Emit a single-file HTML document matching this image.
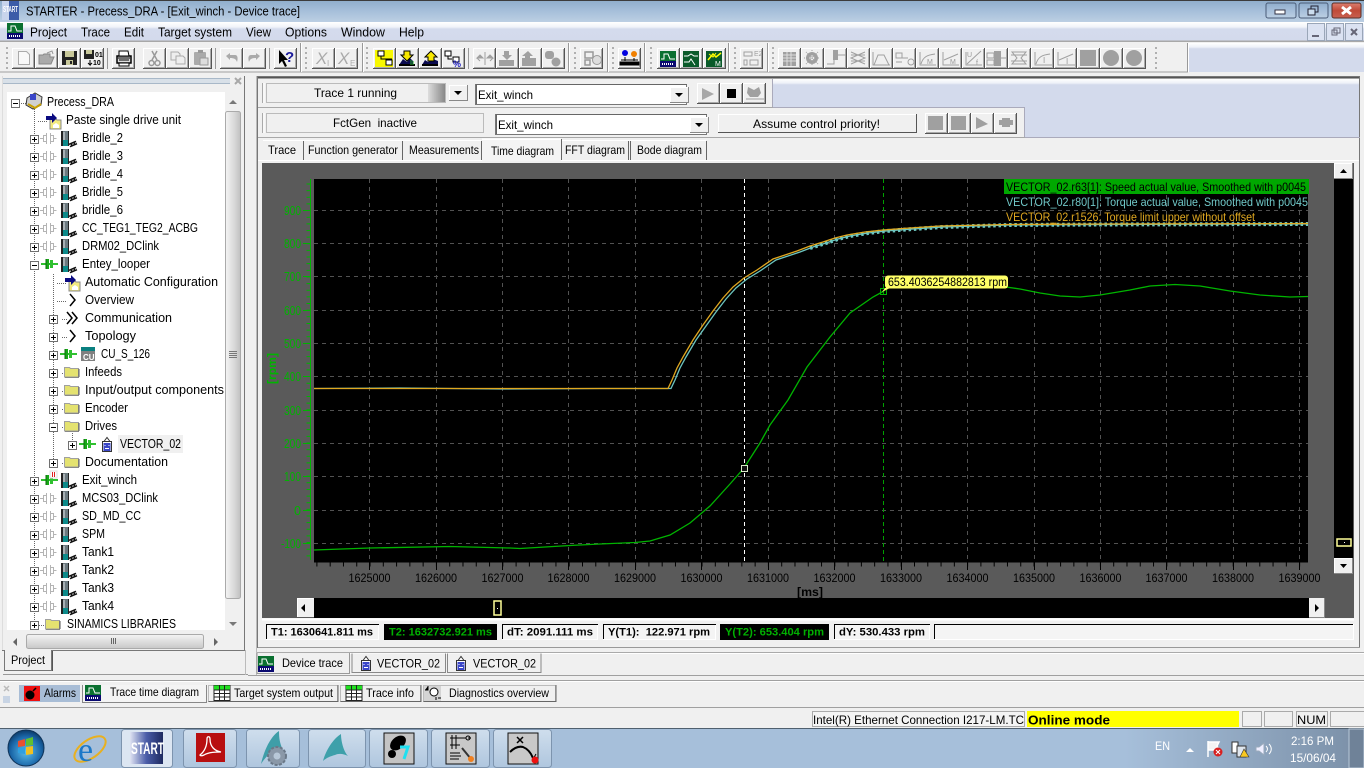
<!DOCTYPE html>
<html><head><meta charset="utf-8"><title>STARTER</title>
<style>
html,body{margin:0;padding:0;background:#f0f0f0;overflow:hidden;width:1364px;height:768px}
svg{display:block;font-family:"Liberation Sans",sans-serif;font-size:12px}
text{fill:#000;white-space:pre}
.tr text,text.tr{font-size:12.5px}
.ax{font-size:12px}
.gy text{fill:#00b400;font-size:12.5px}
.b{font-weight:bold;font-size:11px}
</style></head><body>
<svg width="1364" height="768" viewBox="0 0 1364 768" xmlns="http://www.w3.org/2000/svg">
<defs>
<linearGradient id="gt" x1="0" y1="0" x2="0" y2="1"><stop offset="0" stop-color="#8fadcb"/><stop offset=".5" stop-color="#a6bfda"/><stop offset="1" stop-color="#bccfe3"/></linearGradient>
<linearGradient id="gm" x1="0" y1="0" x2="0" y2="1"><stop offset="0" stop-color="#fff"/><stop offset=".25" stop-color="#f0f3f9"/><stop offset=".35" stop-color="#d4dbed"/><stop offset="1" stop-color="#d3daec"/></linearGradient>
<linearGradient id="gb" x1="0" y1="0" x2="0" y2="1"><stop offset="0" stop-color="#fff"/><stop offset=".14" stop-color="#eef1f8"/><stop offset=".2" stop-color="#d3daec"/><stop offset="1" stop-color="#d3daec"/></linearGradient>
<linearGradient id="gr" x1="0" y1="0" x2="1" y2="0"><stop offset="0" stop-color="#ddd"/><stop offset="1" stop-color="#888"/></linearGradient>
<linearGradient id="gc" x1="0" y1="0" x2="0" y2="1"><stop offset="0" stop-color="#dd8070"/><stop offset=".5" stop-color="#c04a38"/><stop offset="1" stop-color="#c86050"/></linearGradient>
<linearGradient id="gs" x1="0" y1="0" x2="1" y2="0"><stop offset="0" stop-color="#f4f4f4"/><stop offset=".6" stop-color="#d8d8d8"/><stop offset="1" stop-color="#c0c0c0"/></linearGradient>
<linearGradient id="gh" x1="0" y1="0" x2="0" y2="1"><stop offset="0" stop-color="#f4f4f4"/><stop offset="1" stop-color="#c8c8c8"/></linearGradient>
<linearGradient id="gd" x1="0" y1="0" x2="1" y2="0"><stop offset="0" stop-color="#a6bfda"/><stop offset="1" stop-color="#7d92aa"/></linearGradient>
<linearGradient id="gta" x1="0" y1="0" x2="0" y2="1"><stop offset="0" stop-color="#cfdeed"/><stop offset="1" stop-color="#afc6de"/></linearGradient>
<linearGradient id="gst" x1="0" y1="0" x2="1" y2="0"><stop offset="0" stop-color="#dfe3f2"/><stop offset=".5" stop-color="#4a5ca8"/><stop offset="1" stop-color="#1e2a60"/></linearGradient>
<radialGradient id="go" cx=".5" cy=".6" r=".6"><stop offset="0" stop-color="#5cc0ee"/><stop offset=".7" stop-color="#1a66a8"/><stop offset="1" stop-color="#0c3a68"/></radialGradient>

<g id="btn"><rect width="23" height="21" fill="#f0f0f0"/><path d="M.5 21V.5H22" stroke="#fff" fill="none"/><path d="M0 20.5h23M22.5 0v21" stroke="#555" fill="none"/><path d="M1 19.5h21M21.5 1v19" stroke="#aaa" fill="none"/></g>
<g id="grip" fill="#b0b0b0"><rect y="0" width="2" height="2"/><rect y="5" width="2" height="2"/><rect y="10" width="2" height="2"/><rect y="15" width="2" height="2"/><rect y="20" width="2" height="2"/></g>
<g id="sep"><path d="M.5 0v29" stroke="#999"/><path d="M1.5 0v29" stroke="#fff"/></g>

<g id="plus"><rect x=".5" y=".5" width="8" height="8" fill="#fff" stroke="#707070"/><path d="M2 4.5h5M4.5 2v5" stroke="#000"/></g>
<g id="minus"><rect x=".5" y=".5" width="8" height="8" fill="#fff" stroke="#707070"/><path d="M2 4.5h5" stroke="#000"/></g>
<g id="pg" fill="none" stroke="#b4b4b4"><path d="M0 6.5h3M3.500 3.500h3v6h-3zM6.500 1v11M10.500 1v11M10.500 3.500h3v6h-3M13.500 6.500h3"/></g>
<g id="pgr"><path d="M0 6h17" stroke="#30c030" stroke-width="2"/><rect x="5" y="1" width="3" height="10" fill="#18a818"/><rect x="9" y="2" width="3" height="8" fill="#30c030"/><path d="M5 1v10" stroke="#0a6a0a"/></g>
<g id="dv"><rect x="0" y="0" width="2" height="15" fill="#222"/><rect x="2" y="0" width="5" height="9" fill="#6d7a80"/><rect x="2" y="1" width="2" height="8" fill="#a8b0b4"/><rect x="2" y="9" width="5" height="6" fill="#0c8a8a"/><path d="M7.500 0v15" stroke="#222"/><path d="M8.500 14.500l7-3" stroke="#111" stroke-width="4"/><path d="M8.500 14.500l7-3" stroke="#fff" stroke-dasharray="1.500 1.500"/></g>
<g id="dr"><use href="#plus"/><use href="#pg" x="10" y="-3"/><use href="#dv" x="31" y="-4"/></g>
<g id="fd"><path d="M.5 2.500h5l1 1h8v8.500H.5z" fill="#e4e270" stroke="#a0a0a0"/><path d="M15 4v8" stroke="#555"/><path d="M1 12.500h14" stroke="#888"/></g>
<g id="vc"><path d="M1.500 5.500h9v10h-9zM3 5.500l3-4 3 4" fill="#fff" stroke="#333"/><rect x="2.500" y="7" width="7" height="8" fill="#3a46c8"/><path d="M4 9v1M8 9v1M4 12.500h4" stroke="#fff"/></g>
<g id="pst"><path d="M5 6h6l1 1h4v9H5z" fill="#f2ea80" stroke="#888"/><path d="M8 12l3-2 3 2v3H8z" fill="#fff"/><path d="M1 1h6V-2l5 5-5 5V5H1z" fill="#0a0a80" transform="translate(0 2)"/></g>
<g id="tr"><rect width="16" height="16" fill="#0a0a70"/><rect width="16" height="10" fill="#0a7030"/><path d="M1 8h3v-5h4l2 5h5" stroke="#fff" fill="none"/><path d="M2 13h12" stroke="#fff" stroke-dasharray="1 1" stroke-width="2"/></g>
<g id="grid"><rect width="16" height="15" fill="#fff" stroke="#222"/><rect width="16" height="4" fill="#20e020"/><path d="M0 4.500h16M0 8h16M0 11.500h16M5.500 0v15M10.500 0v15" stroke="#222"/></g>
<g id="arU"><path d="M0 4l4-4 4 4z" fill="#000"/></g>
<g id="arD"><path d="M0 0h8l-4 4z" fill="#000"/></g>
<g id="lb"><rect width="19" height="16" fill="#f0f0f0"/><path d="M.5 16V.5H18" stroke="#fff" fill="none"/><path d="M0 15.500h19M18.500 0v16" stroke="#888" fill="none"/></g>
</defs>

<!-- base -->
<rect width="1364" height="768" fill="#f0f0f0"/>
<!-- title bar -->
<rect width="1364" height="22" fill="url(#gt)"/><rect width="1364" height="1" fill="#3c3c3c"/>
<rect x="2" y="1" width="17" height="19" fill="#3c5ca8"/><rect x="2" y="1" width="7" height="19" fill="#c8d4ec"/>
<text x="3" y="12" style="font-size:8px;font-weight:bold" textLength="15" lengthAdjust="spacingAndGlyphs"><tspan fill="#fff">START</tspan></text>
<text x="26" y="15.500" style="font-size:12.5px" textLength="274" lengthAdjust="spacingAndGlyphs">STARTER - Precess_DRA - [Exit_winch - Device trace]</text>
<g>
<rect x="1266" y="3" width="30" height="15" rx="2" fill="url(#gt)" stroke="#4a5c78"/><rect x="1275" y="10" width="10" height="4" fill="#fff" stroke="#334"/>
<rect x="1299" y="3" width="29" height="15" rx="2" fill="url(#gt)" stroke="#4a5c78"/><rect x="1311" y="6" width="7" height="6" fill="none" stroke="#223"/><rect x="1308" y="9" width="7" height="6" fill="#cde" stroke="#223"/>
<rect x="1332" y="3" width="29" height="15" rx="2" fill="url(#gc)" stroke="#5a3028"/><path d="M1342 7l9 7M1351 7l-9 7" stroke="#fff" stroke-width="3"/>
</g>
<!-- menu -->
<rect y="22" width="1364" height="20" fill="url(#gm)"/><rect y="40.500" width="1364" height="1.500" fill="#a8a8a8"/>
<use href="#tr" x="7" y="23"/>
<g style="font-size:12.5px">
<text x="30" y="36.500" textLength="37" lengthAdjust="spacingAndGlyphs">Project</text>
<text x="81" y="36.500" textLength="29" lengthAdjust="spacingAndGlyphs">Trace</text>
<text x="124" y="36.500" textLength="20" lengthAdjust="spacingAndGlyphs">Edit</text>
<text x="158" y="36.500" textLength="74" lengthAdjust="spacingAndGlyphs">Target system</text>
<text x="246" y="36.500" textLength="25" lengthAdjust="spacingAndGlyphs">View</text>
<text x="285" y="36.500" textLength="42" lengthAdjust="spacingAndGlyphs">Options</text>
<text x="341" y="36.500" textLength="44" lengthAdjust="spacingAndGlyphs">Window</text>
<text x="399" y="36.500" textLength="25" lengthAdjust="spacingAndGlyphs">Help</text>
</g>
<g fill="#dbe2f2" stroke="#9aa6b8"><rect x="1307.500" y="23.500" width="17" height="17"/><rect x="1326.500" y="23.500" width="17" height="17"/><rect x="1345.500" y="23.500" width="17" height="17"/></g>
<path d="M1312 36h7" stroke="#667" stroke-width="2"/><rect x="1332" y="30" width="5" height="5" fill="none" stroke="#667"/><rect x="1334" y="28" width="6" height="5" fill="none" stroke="#667"/><path d="M1351 29l6 6M1357 29l-6 6" stroke="#667" stroke-width="2"/>

<!-- toolbar -->
<rect y="42" width="1188" height="30" fill="#f0f0f0"/>
<rect x="1188" y="43" width="176" height="29" fill="url(#gb)"/>
<rect y="71.500" width="1188" height="1" fill="#a0a0a0"/>
<g>
<use href="#grip" x="6" y="47"/><use href="#grip" x="305" y="47"/><use href="#grip" x="366" y="47"/><use href="#grip" x="574" y="47"/><use href="#grip" x="612" y="47"/><use href="#grip" x="650" y="47"/><use href="#grip" x="734" y="47"/><use href="#grip" x="772" y="47"/><use href="#grip" x="1155" y="47"/>
<use href="#sep" x="300" y="43"/><use href="#sep" x="362" y="43"/><use href="#sep" x="568" y="43"/><use href="#sep" x="607" y="43"/><use href="#sep" x="644" y="43"/><use href="#sep" x="728" y="43"/><use href="#sep" x="767" y="43"/><use href="#sep" x="1187" y="43"/>
<path d="M107.500 48v21M215.500 48v21M269.500 48v21M468.500 48v21" stroke="#999"/>
<use href="#btn" x="12" y="48"/><use href="#btn" x="35" y="48"/><use href="#btn" x="58" y="48"/><use href="#btn" x="81" y="48"/><use href="#btn" x="112" y="48"/><use href="#btn" x="143" y="48"/><use href="#btn" x="166" y="48"/><use href="#btn" x="189" y="48"/><use href="#btn" x="220" y="48"/><use href="#btn" x="243" y="48"/><use href="#btn" x="274" y="48"/><use href="#btn" x="312" y="48"/><use href="#btn" x="335" y="48"/><use href="#btn" x="373" y="48"/><use href="#btn" x="396" y="48"/><use href="#btn" x="419" y="48"/><use href="#btn" x="442" y="48"/><use href="#btn" x="473" y="48"/><use href="#btn" x="496" y="48"/><use href="#btn" x="519" y="48"/><use href="#btn" x="542" y="48"/><use href="#btn" x="580" y="48"/><use href="#btn" x="618" y="48"/><use href="#btn" x="657" y="48"/><use href="#btn" x="680" y="48"/><use href="#btn" x="703" y="48"/><use href="#btn" x="740" y="48"/>
<use href="#btn" x="778" y="48"/><use href="#btn" x="801" y="48"/><use href="#btn" x="824" y="48"/><use href="#btn" x="847" y="48"/><use href="#btn" x="870" y="48"/><use href="#btn" x="893" y="48"/><use href="#btn" x="916" y="48"/><use href="#btn" x="939" y="48"/><use href="#btn" x="962" y="48"/><use href="#btn" x="985" y="48"/><use href="#btn" x="1008" y="48"/><use href="#btn" x="1031" y="48"/><use href="#btn" x="1054" y="48"/><use href="#btn" x="1077" y="48"/><use href="#btn" x="1100" y="48"/><use href="#btn" x="1123" y="48"/>
<!-- icons left -->
<path d="M18.500 51.500h8l3 3v10h-11z" fill="#f8f8f8" stroke="#aaa"/>
<path d="M39 64V55h4l1-1h6v3h4l-3 7z" fill="#aaa" stroke="#888"/><path d="M47 53l5-2 1 3" fill="none" stroke="#999"/>
<rect x="62" y="51" width="15" height="14" fill="#222"/><rect x="65" y="51" width="9" height="6" fill="#c8c89a"/><rect x="66" y="60" width="7" height="5" fill="#c8c89a"/><rect x="70" y="61" width="2" height="3" fill="#222"/>
<rect x="84" y="50" width="10" height="9" fill="#222"/><rect x="86" y="50" width="6" height="4" fill="#c8c89a"/><path d="M90 60v5l-2-2m2 2l2-2" stroke="#000" fill="none"/><text x="95" y="57" style="font-size:7px;font-weight:bold">01</text><text x="93" y="65" style="font-size:7px;font-weight:bold">10</text>
<path d="M117 56h14v7h-14z" fill="#ddd" stroke="#000" stroke-width="1.500"/><path d="M119 51h9l1 5h-10z" fill="#fff" stroke="#000"/><path d="M119 60h10M118 58h12" stroke="#000"/><rect x="119" y="63" width="10" height="3" fill="#fff" stroke="#000"/>
<path d="M152 51l5 9M157 51l-5 9" stroke="#999" stroke-width="1.500"/><circle cx="151.500" cy="63" r="2.500" fill="none" stroke="#999" stroke-width="1.500"/><circle cx="157.500" cy="63" r="2.500" fill="none" stroke="#999" stroke-width="1.500"/>
<path d="M171 52h7l2 2v6h-9z" fill="#eee" stroke="#aaa"/><path d="M176 56h7l2 2v6h-9z" fill="#eee" stroke="#aaa"/>
<rect x="194" y="52" width="12" height="13" rx="1" fill="#aaa"/><rect x="198" y="50" width="5" height="3" fill="#999"/><rect x="200" y="58" width="8" height="7" fill="#ddd" stroke="#999"/>
<path d="M226 56l4-3v2h5c3 0 3 4 2 7-1-3-3-4-7-4v2z" fill="#aaa"/>
<path d="M260 56l-4-3v2h-5c-3 0-3 4-2 7 1-3 3-4 7-4v2z" fill="#aaa"/>
<path d="M279 50v14l3-3 3 6 2-1-3-6h4z" fill="#000"/><text x="285" y="62" style="font-size:15px;font-weight:bold"><tspan fill="#1a1a9a">?</tspan></text>
<text x="316" y="64" style="font-size:17px" font-style="italic"><tspan fill="#aaa">X</tspan></text><text x="327" y="66" style="font-size:8px"><tspan fill="#aaa">I</tspan></text>
<text x="338" y="64" style="font-size:17px" font-style="italic"><tspan fill="#aaa">X</tspan></text><text x="350" y="66" style="font-size:8px"><tspan fill="#aaa">E</tspan></text>
<!-- yellow -->
<rect x="375" y="50" width="18" height="17" fill="#f8f800"/><rect x="378" y="51" width="6" height="5" fill="#fff" stroke="#000"/><rect x="386" y="60" width="6" height="5" fill="#fff" stroke="#000"/><path d="M381 56v3h8v1M389 59h3" stroke="#000" fill="none"/>
<path d="M399 65l4-6 4 3 3-4 3 3v4z" fill="#0a0a50"/><path d="M399 65h16" stroke="#000" stroke-width="2"/><path d="M404 51h6v4h3l-6 6-6-6h3z" fill="#f8e800" stroke="#000"/><path d="M413 61v4M411 60v5" stroke="#2a2"/>
<path d="M422 65l3-5 3 2 5-3 5 2v4z" fill="#0a0a50"/><path d="M422 65h16" stroke="#000" stroke-width="2"/><path d="M431 51l6 6h-3v4h-6v-4h-3z" fill="#f8e800" stroke="#000"/>
<rect x="445" y="51" width="6" height="5" fill="#fff" stroke="#000"/><path d="M448 56v3h4" stroke="#000" fill="none"/><rect x="453" y="57" width="6" height="5" fill="#fff" stroke="#000"/><text x="453" y="67" style="font-size:9px;font-weight:bold"><tspan fill="#1a1ac0">%</tspan></text>
<!-- gray mid -->
<path d="M477 58h6l-3-3zM477 58l3 3M493 58h-6l3-3zM493 58l-3 3M485 52v13" stroke="#a0a0a0" fill="#a0a0a0"/>
<path d="M504 51h5v4h3l-5 5-5-5h2z" fill="#a0a0a0"/><rect x="499" y="60" width="15" height="6" fill="#a0a0a0"/>
<path d="M528 51l5 5h-3v4h-5v-4h-3z" fill="#a0a0a0"/><path d="M522 58v8h14v-8" fill="#a0a0a0"/>
<rect x="545" y="51" width="9" height="8" rx="3" fill="#a0a0a0"/><circle cx="556" cy="62" r="4.500" fill="#a0a0a0"/>
<path d="M585 52h8v6h-8zM585 60h5v5h-5z" fill="none" stroke="#999" stroke-width="1.500"/><circle cx="597" cy="60" r="4.500" fill="#ddd" stroke="#999"/>
<circle cx="625" cy="53" r="3" fill="#0000e0"/><circle cx="634" cy="54" r="3" fill="#f08000"/><path d="M625 57v4M634 58v3M621 60h17M620 62h19v3h-19z" stroke="#000" fill="#000"/>
<rect x="660" y="51" width="16" height="16" fill="#0a0a70"/><rect x="660" y="51" width="16" height="10" fill="#0a7030"/><path d="M661 59h3v-5h4l2 5h5" stroke="#fff" fill="none"/><path d="M662 64h12" stroke="#fff" stroke-width="2" stroke-dasharray="1 1"/>
<rect x="683" y="51" width="16" height="16" fill="#0a5a2a"/><path d="M684 56h4l3-2 3 2h4M684 62h5l2-3 4 6" stroke="#fff" fill="none"/>
<rect x="706" y="51" width="16" height="16" fill="#0a5a2a"/><path d="M708 60l5-6 3 3 5-4" stroke="#ff0" fill="none" stroke-width="1.500"/><path d="M709 54l4 3 3-4" stroke="#ff0" fill="none"/><text x="715" y="66" style="font-size:7px"><tspan fill="#fff">M</tspan></text>
<g fill="#a0a0a0" stroke="#a0a0a0"><path d="M744 52h8v4h-8zM744 60h3v5h-3zM750 60h8v5h-8z" fill="none"/></g><text x="754" y="56" style="font-size:7px"><tspan fill="#a0a0a0">E2</tspan></text>
<!-- disabled right -->
<rect x="783" y="52" width="13" height="14" fill="#a0a0a0"/><path d="M783 55h13M783 58h13M783 61h13M787 52v14M791 52v14" stroke="#ddd"/>
<circle cx="812" cy="58" r="6" fill="#a0a0a0"/><circle cx="812" cy="58" r="2.500" fill="#f0f0f0"/><path d="M812 50v16M804 58h16M806 52l12 12M818 52l-12 12" stroke="#a0a0a0" stroke-dasharray="1 1"/>
<rect x="833" y="50" width="5" height="10" fill="#a0a0a0"/><path d="M827 64h7v-5M838 55h8" stroke="#a0a0a0" fill="none"/>
<path d="M851 52l14 6-14 6M865 52l-14 6 14 6M851 55h14M851 61h14" stroke="#a0a0a0" fill="none"/>
<path d="M873 52v13h17M874 65l4-10h6l5 10" stroke="#a0a0a0" fill="none"/>
<path d="M896 53h6v5h-6zM896 62h6M902 58h6M908 62a3 3 0 1 0 6 0a3 3 0 1 0-6 0" stroke="#a0a0a0" fill="none"/>
<path d="M920 52v13h16M921 64c2-7 6-9 14-10" stroke="#a0a0a0" fill="none"/><text x="927" y="64" style="font-size:7px"><tspan fill="#999">M</tspan></text>
<path d="M943 52v13h16M944 60l14-6" stroke="#a0a0a0" fill="none"/><text x="950" y="64" style="font-size:7px"><tspan fill="#999">M</tspan></text>
<path d="M966 52v13h16M967 64l14-13" stroke="#a0a0a0" fill="none"/><text x="967" y="57" style="font-size:7px"><tspan fill="#999">U</tspan></text><text x="976" y="65" style="font-size:7px"><tspan fill="#999">f</tspan></text>
<rect x="994" y="51" width="7" height="15" fill="#a0a0a0"/><path d="M987 53h7v5h-7zM987 60h7v5h-7zM1001 58h5" stroke="#a0a0a0" fill="none"/>
<path d="M1012 52h14l-5 6 5 6h-14l5-6zM1011 55h16M1011 61h16" stroke="#a0a0a0" fill="none"/>
<path d="M1035 52v13h17M1036 64c2-7 6-9 14-10" stroke="#a0a0a0" fill="none"/><text x="1043" y="63" style="font-size:8px"><tspan fill="#999">I</tspan></text>
<path d="M1058 52v13h17M1059 60l14-6" stroke="#a0a0a0" fill="none"/><text x="1066" y="64" style="font-size:8px"><tspan fill="#999">I</tspan></text>
<rect x="1080" y="50" width="16" height="16" fill="#a0a0a0"/><circle cx="1111" cy="58" r="8" fill="#a0a0a0"/><circle cx="1134" cy="58" r="8" fill="#a0a0a0"/>
</g>

<!-- Left panel -->
<path d="M3 78.500h227M3 80.500h227M3 83.500h227" stroke="#a8b8c8"/><rect x="3" y="79" width="227" height="4" fill="#d8e0e8"/>
<path d="M235 78l6 6M241 78l-6 6" stroke="#a8a8a8" stroke-width="2"/>
<rect x="7" y="92" width="218" height="538" fill="#fff"/>
<rect x="225" y="92" width="16" height="538" fill="#f0f0f0"/>
<use href="#arU" x="229" y="100" opacity=".5"/>
<rect x="225.500" y="111.500" width="15" height="487" rx="2" fill="url(#gs)" stroke="#aaa"/>
<path d="M229 351.500h8M229 353.500h8M229 355.500h8M229 357.500h8" stroke="#777"/>
<use href="#arD" x="229" y="622" opacity=".5"/>
<rect x="7" y="630" width="234" height="20" fill="#f0f0f0"/>
<rect x="26.500" y="634.500" width="177" height="14" rx="2" fill="url(#gh)" stroke="#aaa"/><path d="M111.500 638v6M113.500 638v6M115.500 638v6" stroke="#666"/>
<path d="M17 638l-4 4 4 4z" fill="#666"/><path d="M214 638l4 4-4 4z" fill="#666"/>
<path d="M244.500 76v574M2 650.500h243" stroke="#777"/><path d="M2.500 76v574" stroke="#ddd"/>
<path d="M4.500 651v19.500h47V651" fill="#f0f0f0" stroke="#777"/><path d="M5 650.500h46" stroke="#f0f0f0"/><path d="M52.500 651v20" stroke="#555"/>
<text x="11" y="664" textLength="34" lengthAdjust="spacingAndGlyphs">Project</text>
<path d="M3 674.500h245" stroke="#999"/><path d="M245.500 650v25M256.500 76v599" stroke="#bbb"/>

<!-- tree lines -->
<g stroke="#666" stroke-dasharray="1 1" fill="none">
<path d="M34.500 107v518M53.500 274v190M72.500 433v8M19 103.500h9M38 121.500h10M57 283.500h10M57 301.500h10M62 319.500h5M62 337.500h5M62 373.500h5M62 391.500h5M62 409.500h5M62 427.500h5M62 463.500h5"/>
</g>
<g class="tr">
<use href="#minus" x="11" y="99"/>
<path d="M27 98l8-5 7 4-1 8-8 4-7-4z" fill="#d0d0d0" stroke="#333"/><rect x="30" y="94" width="6" height="6" fill="#3a46c8"/><path d="M28 104l7 4 6-4" stroke="#c8a000" fill="none" stroke-width="2"/>
<text x="47" y="106" textLength="67" lengthAdjust="spacingAndGlyphs">Precess_DRA</text>
<use href="#pst" x="45" y="113"/><text x="66" y="124" textLength="115" lengthAdjust="spacingAndGlyphs">Paste single drive unit</text>
<use href="#dr" x="30" y="135"/><text x="82" y="142" textLength="41" lengthAdjust="spacingAndGlyphs">Bridle_2</text>
<use href="#dr" x="30" y="153"/><text x="82" y="160" textLength="41" lengthAdjust="spacingAndGlyphs">Bridle_3</text>
<use href="#dr" x="30" y="171"/><text x="82" y="178" textLength="41" lengthAdjust="spacingAndGlyphs">Bridle_4</text>
<use href="#dr" x="30" y="189"/><text x="82" y="196" textLength="41" lengthAdjust="spacingAndGlyphs">Bridle_5</text>
<use href="#dr" x="30" y="207"/><text x="82" y="214" textLength="41" lengthAdjust="spacingAndGlyphs">bridle_6</text>
<use href="#dr" x="30" y="225"/><text x="82" y="232" textLength="116" lengthAdjust="spacingAndGlyphs">CC_TEG1_TEG2_ACBG</text>
<use href="#dr" x="30" y="243"/><text x="82" y="250" textLength="77" lengthAdjust="spacingAndGlyphs">DRM02_DClink</text>
<use href="#minus" x="30" y="261"/><use href="#pgr" x="41" y="258"/><use href="#dv" x="61" y="257"/><text x="82" y="268" textLength="68" lengthAdjust="spacingAndGlyphs">Entey_looper</text>
<use href="#pst" x="64" y="275"/><text x="85" y="286" textLength="133" lengthAdjust="spacingAndGlyphs">Automatic Configuration</text>
<path d="M70 294l5 6-5 6" fill="none" stroke="#000" stroke-width="1.500"/><text x="85" y="304" textLength="49" lengthAdjust="spacingAndGlyphs">Overview</text>
<use href="#plus" x="49" y="315"/><path d="M67 312l5 6-5 6M72 312l5 6-5 6" fill="none" stroke="#000" stroke-width="1.500"/><text x="85" y="322" textLength="87" lengthAdjust="spacingAndGlyphs">Communication</text>
<use href="#plus" x="49" y="333"/><path d="M70 330l5 6-5 6" fill="none" stroke="#000" stroke-width="1.500"/><text x="85" y="340" textLength="51" lengthAdjust="spacingAndGlyphs">Topology</text>
<use href="#plus" x="49" y="351"/><use href="#pgr" x="60" y="348"/><rect x="81" y="347" width="14" height="4" fill="#0a8080"/><rect x="81" y="351" width="14" height="10" fill="#808080"/><text x="83" y="360" style="font-size:8px;font-weight:bold"><tspan fill="#fff">CU</tspan></text><text x="101" y="358" textLength="49" lengthAdjust="spacingAndGlyphs">CU_S_126</text>
<use href="#plus" x="49" y="369"/><use href="#fd" x="64" y="365"/><text x="85" y="376" textLength="37" lengthAdjust="spacingAndGlyphs">Infeeds</text>
<use href="#plus" x="49" y="387"/><use href="#fd" x="64" y="383"/><text x="85" y="394" textLength="139" lengthAdjust="spacingAndGlyphs">Input/output components</text>
<use href="#plus" x="49" y="405"/><use href="#fd" x="64" y="401"/><text x="85" y="412" textLength="43" lengthAdjust="spacingAndGlyphs">Encoder</text>
<use href="#minus" x="49" y="423"/><use href="#fd" x="64" y="419"/><text x="85" y="430" textLength="32" lengthAdjust="spacingAndGlyphs">Drives</text>
<rect x="118" y="435" width="65" height="18" fill="#f0f0f0"/>
<use href="#plus" x="68" y="441"/><use href="#pgr" x="79" y="438"/><use href="#vc" x="101" y="436"/><text x="120" y="448" textLength="61" lengthAdjust="spacingAndGlyphs">VECTOR_02</text>
<use href="#plus" x="49" y="459"/><use href="#fd" x="64" y="455"/><text x="85" y="466" textLength="83" lengthAdjust="spacingAndGlyphs">Documentation</text>
<use href="#plus" x="30" y="477"/><use href="#pgr" x="41" y="474"/><rect x="50" y="471" width="7" height="7" fill="#fff" stroke="#ddd"/><path d="M52.500 472v5M54.500 472v5" stroke="#e02020"/><use href="#dv" x="61" y="473"/><text x="82" y="484" textLength="55" lengthAdjust="spacingAndGlyphs">Exit_winch</text>
<use href="#dr" x="30" y="495"/><text x="82" y="502" textLength="76" lengthAdjust="spacingAndGlyphs">MCS03_DClink</text>
<use href="#dr" x="30" y="513"/><text x="82" y="520" textLength="59" lengthAdjust="spacingAndGlyphs">SD_MD_CC</text>
<use href="#dr" x="30" y="531"/><text x="82" y="538" textLength="23" lengthAdjust="spacingAndGlyphs">SPM</text>
<use href="#dr" x="30" y="549"/><text x="82" y="556" textLength="32" lengthAdjust="spacingAndGlyphs">Tank1</text>
<use href="#dr" x="30" y="567"/><text x="82" y="574" textLength="32" lengthAdjust="spacingAndGlyphs">Tank2</text>
<use href="#dr" x="30" y="585"/><text x="82" y="592" textLength="32" lengthAdjust="spacingAndGlyphs">Tank3</text>
<use href="#dr" x="30" y="603"/><text x="82" y="610" textLength="32" lengthAdjust="spacingAndGlyphs">Tank4</text>
<use href="#plus" x="30" y="621"/><path d="M39 625.500h6" stroke="#666" stroke-dasharray="1 1"/><use href="#fd" x="45" y="617"/><text x="67" y="628" textLength="109" lengthAdjust="spacingAndGlyphs">SINAMICS LIBRARIES</text>
</g>

<!-- Main panel -->
<rect x="257.500" y="76.500" width="1102" height="571" fill="#f0f0f0" stroke="#777"/>
<rect x="258" y="77" width="1101" height="1.500" fill="#555"/>
<rect x="773" y="79" width="586" height="29" fill="url(#gb)"/>
<rect x="1025" y="108" width="334" height="29" fill="#d3daec"/>
<path d="M772.500 79v28M773 107.500h252M1024.500 108v29M1025 137.500h335" stroke="#aab"/><path d="M258 107.500h515M258 137.500h767" stroke="#a8a8a8"/>
<path d="M262.500 83v20M262.500 113v20" stroke="#aaa"/><path d="M264 83v20M264 113v20" stroke="#fff"/>
<rect x="266.500" y="83.500" width="179" height="19" fill="#f0f0f0" stroke="#bbb"/><rect x="428" y="84" width="17" height="18" fill="url(#gr)"/>
<text x="314" y="97" textLength="83" lengthAdjust="spacingAndGlyphs">Trace 1 running</text>
<use href="#lb" x="449" y="85"/><use href="#arD" x="454" y="91"/>
<rect x="475.500" y="84.500" width="211" height="20" fill="#fff" stroke="#777"/><path d="M476 84.500h211M476.500 84v20" stroke="#666" stroke-width="1"/>
<text x="478" y="99" textLength="55" lengthAdjust="spacingAndGlyphs">Exit_winch</text>
<use href="#lb" x="670" y="87"/><use href="#arD" x="675" y="93"/>
<g><use href="#btn" x="697" y="83"/><path d="M702 88v12l12-6z" fill="#a8a8a8"/><use href="#btn" x="720" y="83"/><rect x="727" y="89" width="9" height="9" fill="#000"/><use href="#btn" x="743" y="83"/><path d="M748 87l6 3 5-3 2 6-3 4h-8l-3-4z" fill="#a0a0a0"/><path d="M746 99h18" stroke="#a0a0a0"/></g>
<rect x="266.500" y="113.500" width="217" height="19" fill="#f0f0f0" stroke="#bbb"/>
<text x="333" y="127" textLength="84" lengthAdjust="spacingAndGlyphs">FctGen  inactive</text>
<rect x="495.500" y="114.500" width="211" height="20" fill="#fff" stroke="#777"/><path d="M496 114.500h211M496.500 114v20" stroke="#666"/>
<text x="498" y="129" textLength="55" lengthAdjust="spacingAndGlyphs">Exit_winch</text>
<use href="#lb" x="690" y="117"/><use href="#arD" x="695" y="123"/>
<rect x="718" y="114" width="199" height="19" fill="#f0f0f0"/><path d="M718.500 133V114.500H916" stroke="#fff" fill="none"/><path d="M718 132.500h199M916.500 114v19" stroke="#555" fill="none"/>
<text x="753" y="128" textLength="127" lengthAdjust="spacingAndGlyphs">Assume control priority!</text>
<use href="#btn" x="925" y="113"/><rect x="928" y="116" width="15" height="14" fill="#a0a0a0"/>
<use href="#btn" x="948" y="113"/><rect x="951" y="116" width="15" height="14" fill="#a0a0a0"/>
<use href="#btn" x="971" y="113"/><path d="M976 117v12l12-5z" fill="#a0a0a0"/>
<use href="#btn" x="994" y="113"/><path d="M999 120h3v-2h8v2h3v5h-3v2h-8v-2h-3z" fill="#a0a0a0"/>
<!-- tabs -->
<path d="M258 160.500h1101" stroke="#fff"/>
<path d="M303.500 141v19M402.500 141v19M481.500 141v19M561.500 139v21M628.500 141v19M630.500 141v19M706.500 141v19" stroke="#666"/>
<path d="M263 140.500h218M562 140.500h144" stroke="#fff"/>
<path d="M482 139.500h79" stroke="#fff" stroke-width="2"/><rect x="482" y="140" width="79" height="21" fill="#f4f4f4"/><path d="M561.500 140v20" stroke="#666"/>
<text x="268" y="154" textLength="28" lengthAdjust="spacingAndGlyphs">Trace</text>
<text x="308" y="154" textLength="90" lengthAdjust="spacingAndGlyphs">Function generator</text>
<text x="409" y="154" textLength="70" lengthAdjust="spacingAndGlyphs">Measurements</text>
<text x="491" y="155" textLength="63" lengthAdjust="spacingAndGlyphs">Time diagram</text>
<text x="565" y="154" textLength="60" lengthAdjust="spacingAndGlyphs">FFT diagram</text>
<text x="637" y="154" textLength="65" lengthAdjust="spacingAndGlyphs">Bode diagram</text>

<!-- chart -->
<rect x="262" y="163" width="1092" height="455" fill="#5a5a5a"/>
<rect x="314" y="179" width="994" height="382" fill="#000"/>
<g fill="none" stroke="#525252" stroke-dasharray="4 4">
<path d="M314 210.500h994M314 243.500h994M314 276.500h994M314 310.500h994M314 343.500h994M314 376.500h994M314 410.500h994M314 443.500h994M314 476.500h994M314 510.500h994M314 543.500h994"/>
<path d="M369.500 179v382M436.500 179v382M502.500 179v382M568.500 179v382M635.500 179v382M701.500 179v382M768.500 179v382M834.500 179v382M901.500 179v382M967.500 179v382M1034.500 179v382M1100.500 179v382M1166.500 179v382M1233.500 179v382M1299.500 179v382"/>
</g>
<!-- y axis -->
<path d="M310.500 179v381" stroke="#00b400"/>
<line x1="308.500" y1="183.500" x2="308.500" y2="560" stroke="#00b400" stroke-width="4" stroke-dasharray="1 5.64"/>
<path d="M303 210.500h8M303 243.500h8M303 276.500h8M303 310.500h8M303 343.500h8M303 376.500h8M303 410.500h8M303 443.500h8M303 476.500h8M303 510.500h8M303 543.500h8" stroke="#00b400"/>
<g class="gy" text-anchor="end">
<text x="301" y="215" textLength="17" lengthAdjust="spacingAndGlyphs">900</text><text x="301" y="248" textLength="17" lengthAdjust="spacingAndGlyphs">800</text><text x="301" y="281" textLength="17" lengthAdjust="spacingAndGlyphs">700</text><text x="301" y="315" textLength="17" lengthAdjust="spacingAndGlyphs">600</text><text x="301" y="348" textLength="17" lengthAdjust="spacingAndGlyphs">500</text><text x="301" y="381" textLength="17" lengthAdjust="spacingAndGlyphs">400</text><text x="301" y="415" textLength="17" lengthAdjust="spacingAndGlyphs">300</text><text x="301" y="448" textLength="17" lengthAdjust="spacingAndGlyphs">200</text><text x="301" y="481" textLength="17" lengthAdjust="spacingAndGlyphs">100</text><text x="301" y="515">0</text><text x="301" y="548" textLength="20" lengthAdjust="spacingAndGlyphs">-100</text>
</g>
<text transform="translate(276 384) rotate(-90)" style="font-size:12px;font-weight:bold" textLength="31" lengthAdjust="spacingAndGlyphs"><tspan fill="#00b400">[rpm]</tspan></text>
<!-- x axis -->
<path d="M314 561.500h994" stroke="#000" stroke-width="2"/>
<line x1="316.400" y1="564" x2="1308" y2="564" stroke="#000" stroke-width="5" stroke-dasharray="1 12.28"/>
<path d="M369.500 561v9M436.500 561v9M502.500 561v9M568.500 561v9M635.500 561v9M701.500 561v9M768.500 561v9M834.500 561v9M901.500 561v9M967.500 561v9M1034.500 561v9M1100.500 561v9M1166.500 561v9M1233.500 561v9M1299.500 561v9" stroke="#000"/>
<g class="ax">
<text x="348.500" y="582" textLength="42" lengthAdjust="spacingAndGlyphs">1625000</text><text x="415" y="582" textLength="42" lengthAdjust="spacingAndGlyphs">1626000</text><text x="481.500" y="582" textLength="42" lengthAdjust="spacingAndGlyphs">1627000</text><text x="547.500" y="582" textLength="42" lengthAdjust="spacingAndGlyphs">1628000</text><text x="614" y="582" textLength="42" lengthAdjust="spacingAndGlyphs">1629000</text><text x="680.500" y="582" textLength="42" lengthAdjust="spacingAndGlyphs">1630000</text><text x="747" y="582" textLength="42" lengthAdjust="spacingAndGlyphs">1631000</text><text x="813.500" y="582" textLength="42" lengthAdjust="spacingAndGlyphs">1632000</text><text x="880" y="582" textLength="42" lengthAdjust="spacingAndGlyphs">1633000</text><text x="946.500" y="582" textLength="42" lengthAdjust="spacingAndGlyphs">1634000</text><text x="1013" y="582" textLength="42" lengthAdjust="spacingAndGlyphs">1635000</text><text x="1079.500" y="582" textLength="42" lengthAdjust="spacingAndGlyphs">1636000</text><text x="1145.500" y="582" textLength="42" lengthAdjust="spacingAndGlyphs">1637000</text><text x="1212" y="582" textLength="42" lengthAdjust="spacingAndGlyphs">1638000</text><text x="1278.500" y="582" textLength="42" lengthAdjust="spacingAndGlyphs">1639000</text>
</g>
<text x="797" y="596" style="font-size:12px;font-weight:bold" textLength="26" lengthAdjust="spacingAndGlyphs">[ms]</text>
<!-- cursors -->
<path d="M744.500 179v382" stroke="#fff" stroke-dasharray="4 3"/>
<path d="M883.500 179v382" stroke="#00a000" stroke-dasharray="4 3"/>
<!-- traces -->
<polyline points="314,388.500 400,388 500,389 600,388.500 671,388.500 675,380 680,368 686,357 696,340 706,326 716,312 726,299 736,288 747,279 760,271 776,260 788,256 800,252 813,247 826,243 838,239 850,236 868,233 886,231 913,229 943,227 1010,225 1103,224.500 1308,224" fill="none" stroke="#6cc6c0" stroke-width="1.300"/>
<polyline points="810,248 826,243 838,239 850,236 868,233 886,231 913,229 943,227 1010,225 1103,224.500 1308,224" fill="none" stroke="#6cc6c0" stroke-width="4" stroke-dasharray="2.500 2.800"/>
<polyline points="314,388.500 668,388.500 672,380 677,368 683,357 693,340 703,325 713,311 723,298 733,287 744,278 757,270 773,259 785,255 797,251 810,246 823,242 835,238 847,235 865,232 883,230 910,228 940,226 1007,224.500 1100,224 1308,223.500" fill="none" stroke="#e0a820" stroke-width="1.300"/>
<polyline points="314,550 370,548 450,546.500 510,548 520,548.500 570,545.500 600,544 635,542.500 650,541 670,535 690,523 710,506 730,484 744,468 760,443 770,425 788,400 807,367 830,337 850,313 873,297 884,291" fill="none" stroke="#00b400" stroke-width="1.300"/>
<polyline points="1006,287 1020,289 1040,293 1060,296 1080,297 1100,295 1130,290 1150,286 1175,284.500 1200,286 1230,291 1260,295 1290,297 1308,296.500" fill="none" stroke="#00b400" stroke-width="1.300"/>
<rect x="741.500" y="465.500" width="6" height="6" fill="#111" stroke="#d8e8c8"/>
<rect x="880.500" y="288.500" width="6" height="6" fill="none" stroke="#00b400"/>
<rect x="885" y="275.500" width="123" height="13" rx="3" fill="#ffff66"/><path d="M885 288l-3 4 8-4z" fill="#ffff66"/>
<text x="888" y="286" style="font-size:12px" textLength="119" lengthAdjust="spacingAndGlyphs">653.4036254882813 rpm</text>
<!-- legend -->
<rect x="1004" y="179" width="305" height="15" fill="#00a800"/>
<text x="1006" y="191" textLength="300" lengthAdjust="spacingAndGlyphs" style="font-size:12px">VECTOR_02.r63[1]: Speed actual value, Smoothed with p0045</text>
<text x="1006" y="206" textLength="302" lengthAdjust="spacingAndGlyphs" style="font-size:12px"><tspan fill="#70c8c8">VECTOR_02.r80[1]: Torque actual value, Smoothed with p0045</tspan></text>
<text x="1006" y="221" textLength="249" lengthAdjust="spacingAndGlyphs" style="font-size:12px"><tspan fill="#e0a820">VECTOR_02.r1526: Torque limit upper without offset</tspan></text>
<!-- right scroll -->
<rect x="1334" y="163" width="19" height="411" fill="#000"/>
<use href="#lb" x="1334" y="163"/><path d="M1340 173l3.500-4 3.500 4z" fill="#000"/>
<use href="#lb" x="1334" y="558"/><path d="M1340 564h7l-3.500 4z" fill="#000"/>
<rect x="1337" y="539" width="14" height="7" fill="#000" stroke="#ffff99" stroke-width="1.500"/><rect x="1344" y="542" width="1" height="1" fill="#fff"/>
<!-- overview -->
<rect x="314" y="598" width="996" height="20" fill="#000"/>
<rect x="297" y="598" width="17" height="19" fill="#f0f0f0"/><path d="M297.500 617v-18.500H313" stroke="#fff" fill="none"/><path d="M305 604l-4 4 4 4z" fill="#000"/>
<rect x="1309" y="598" width="16" height="20" fill="#f0f0f0"/><path d="M1309 617.500h16M1324.500 598v20" stroke="#888"/><path d="M1315 604l4 4-4 4z" fill="#000"/>
<rect x="494" y="601" width="7" height="14" fill="#000" stroke="#ffff99" stroke-width="1.500"/><rect x="497" y="608" width="1" height="1" fill="#fff"/>
<!-- readout strip -->
<rect x="258" y="618" width="1101" height="29" fill="#f0f0f0"/>
<path d="M262 619.500h1092" stroke="#fff" stroke-width="2"/>
<g fill="#f4f4f4" stroke="#fff">
<rect x="266.500" y="624.500" width="112" height="15"/><rect x="502.500" y="624.500" width="95" height="15"/><rect x="603.500" y="624.500" width="112" height="15"/><rect x="834.500" y="624.500" width="95" height="15"/><rect x="934.500" y="624.500" width="419" height="15"/>
</g>
<path d="M266 624.500h113M502 624.500h96M603 624.500h113M834 624.500h96M934 624.500h419M266.500 624v15M502.500 624v15M603.500 624v15M834.500 624v15M934.500 624v15" stroke="#000"/>
<rect x="384" y="624" width="113" height="16" fill="#000"/><rect x="720" y="624" width="109" height="16" fill="#000"/>
<g class="b">
<text x="271" y="635.500" textLength="102" lengthAdjust="spacingAndGlyphs">T1: 1630641.811 ms</text>
<text x="389" y="635.500" textLength="103" lengthAdjust="spacingAndGlyphs"><tspan fill="#00b000">T2: 1632732.921 ms</tspan></text>
<text x="507" y="635.500" textLength="86" lengthAdjust="spacingAndGlyphs">dT: 2091.111 ms</text>
<text x="608" y="635.500" textLength="102" lengthAdjust="spacingAndGlyphs">Y(T1):  122.971 rpm</text>
<text x="725" y="635.500" textLength="99" lengthAdjust="spacingAndGlyphs"><tspan fill="#00b000">Y(T2): 653.404 rpm</tspan></text>
<text x="839" y="635.500" textLength="86" lengthAdjust="spacingAndGlyphs">dY: 530.433 rpm</text>
</g>
<path d="M258 647.500h1102" stroke="#999"/>

<!-- doc tabs -->
<path d="M257 652.500h1107" stroke="#aaa"/><path d="M257 653.500h1107" stroke="#fff"/>
<path d="M257 653v20.500h92.500V653" fill="#f0f0f0" stroke="#999"/>
<use href="#tr" x="258" y="656"/><text x="282" y="667" textLength="61" lengthAdjust="spacingAndGlyphs">Device trace</text>
<path d="M352 653.500V672.500h93.500V653.500" fill="#f0f0f0" stroke="#888"/><path d="M447.500 653.500V672.500h93.500V653.500" fill="#f0f0f0" stroke="#888"/>
<use href="#vc" x="360" y="655"/><use href="#vc" x="455" y="655"/>
<text x="377" y="667.500" textLength="63" lengthAdjust="spacingAndGlyphs">VECTOR_02</text><text x="473" y="667.500" textLength="63" lengthAdjust="spacingAndGlyphs">VECTOR_02</text>
<path d="M248 675.500h1116M0 680.500h1364" stroke="#a0a0a0"/><path d="M0 681.500h1364" stroke="#fff"/>

<!-- dock -->
<path d="M4 686l5 5M9 686l-5 5" stroke="#bbb" stroke-width="1.500"/><rect x="3" y="696" width="7" height="7" fill="#c8d4e4"/>
<rect x="19" y="685" width="61" height="17" fill="#a8bdd6"/>
<rect x="24" y="686" width="16" height="15" fill="#ee1010"/><circle cx="30" cy="695" r="4.500" fill="#000"/><path d="M33 691l3-3" stroke="#000" stroke-width="1.500"/>
<text x="44" y="697" textLength="32" lengthAdjust="spacingAndGlyphs">Alarms</text>
<path d="M82.500 685v17.500h124V685" fill="#f4f4f4" stroke="#888"/>
<use href="#tr" x="85" y="685"/><text x="110" y="696" textLength="89" lengthAdjust="spacingAndGlyphs">Trace time diagram</text>
<rect x="208.500" y="685.500" width="129" height="16" fill="#f0f0f0" stroke="#bbb"/><path d="M208.500 701.500h129.500M338 685v17" stroke="#666"/>
<use href="#grid" x="214" y="685.500"/><text x="234" y="697" textLength="99" lengthAdjust="spacingAndGlyphs">Target system output</text>
<rect x="340.500" y="685.500" width="80" height="16" fill="#f0f0f0" stroke="#bbb"/><path d="M340.500 701.500h80.500M421 685v17" stroke="#666"/>
<use href="#grid" x="346" y="685.500"/><text x="366" y="697" textLength="48" lengthAdjust="spacingAndGlyphs">Trace info</text>
<rect x="423.500" y="685.500" width="132" height="16" fill="#f0f0f0" stroke="#bbb"/><path d="M423.500 701.500h132.500M556 685v17" stroke="#666"/>
<rect x="424" y="686" width="17" height="15" fill="#d4d4d4"/><circle cx="434" cy="692" r="4" fill="#fff" stroke="#000"/><path d="M428 686v4h-3M438 698h3M436 697v3" stroke="#000"/>
<text x="449" y="697" textLength="100" lengthAdjust="spacingAndGlyphs">Diagnostics overview</text>
<path d="M0 707.500h1364" stroke="#a0a0a0"/>
<!-- status -->
<rect x="812.500" y="711.500" width="212" height="15" fill="#f4f4f4" stroke="#aaa"/>
<text x="813" y="724" textLength="211" lengthAdjust="spacingAndGlyphs">Intel(R) Ethernet Connection I217-LM.TC</text>
<rect x="1027" y="711" width="212" height="16" fill="#ffff00"/>
<text x="1028" y="724.500" style="font-size:12.500px;font-weight:bold" textLength="82" lengthAdjust="spacingAndGlyphs">Online mode</text>
<g fill="#f0f0f0" stroke="#aaa"><rect x="1242.500" y="711.500" width="19" height="15"/><rect x="1264.500" y="711.500" width="28" height="15"/><rect x="1296.500" y="711.500" width="31" height="15"/><rect x="1330.500" y="711.500" width="34" height="15"/></g>
<text x="1297" y="724" textLength="29" lengthAdjust="spacingAndGlyphs">NUM</text>

<!-- taskbar -->
<rect y="728" width="1364" height="40" fill="#a6bfda"/>
<rect x="1125" y="728" width="224" height="40" fill="url(#gd)"/>
<rect y="728" width="1364" height="1" fill="#50606f"/>
<rect x="1349" y="729" width="15" height="39" fill="#6f8298" stroke="#b8c8d8"/>
<rect x="121.500" y="729.500" width="51" height="38" rx="3" fill="#dce6f2" stroke="#7d94ae"/>
<g fill="url(#gta)" stroke="#7d94ae">
<rect x="183.500" y="729.500" width="53" height="38" rx="3"/><rect x="246.500" y="729.500" width="53" height="38" rx="3"/><rect x="308.500" y="729.500" width="57" height="38" rx="3"/><rect x="369.500" y="729.500" width="58" height="38" rx="3"/><rect x="431.500" y="729.500" width="58" height="38" rx="3"/><rect x="493.500" y="729.500" width="58" height="38" rx="3"/>
</g>
<circle cx="26" cy="748" r="18" fill="url(#go)" stroke="#0f3358"/>
<path d="M18 741l7-2v7l-7 1z" fill="#e85030"/><path d="M26 739l7-2v8l-7 1z" fill="#60c030"/><path d="M18 748l7-1v7l-7-1z" fill="#30a0e0"/><path d="M26 747l7-1v8l-7 1z" fill="#f0c020"/>
<ellipse cx="90" cy="749" rx="18" ry="9" fill="none" stroke="#e8b020" stroke-width="2" transform="rotate(-35 90 749)"/>
<text x="78" y="761" style="font-size:34px;font-family:'Liberation Serif',serif"><tspan fill="#1c78c8">e</tspan></text>
<rect x="130" y="732" width="33" height="32" fill="url(#gst)"/><text x="131" y="754" style="font-size:17px;font-weight:bold" textLength="33" lengthAdjust="spacingAndGlyphs"><tspan fill="#fff">START</tspan></text>
<rect x="196" y="733" width="29" height="29" fill="#b80f10"/><path d="M200 755c5-4 7-10 7-16 0-3 3-3 3 0 0 8 5 12 11 13-5 0-12 0-17 3-2 1-4 1-4 0z" fill="none" stroke="#fff" stroke-width="1.300"/>
<path d="M261 764c3-13 9-27 18-33 0 8 1 12 3 17-8 0-15 7-21 16z" fill="#3e9ea8"/><circle cx="277" cy="756" r="9" fill="#8a98a8" stroke="#6a7888" stroke-dasharray="3 1.500" stroke-width="2"/><circle cx="277" cy="756" r="3.500" fill="#b8c8d8"/>
<path d="M323 761c3-11 10-22 18-27 0 8 3 18 7 22-4-2-9-3-13-1-4 1-9 3-12 6z" fill="#3ea0aa"/>
<rect x="384" y="733" width="30" height="31" fill="#c4c4c4" stroke="#111"/><ellipse cx="398" cy="743" rx="9" ry="6" fill="#000" transform="rotate(-40 398 743)"/><ellipse cx="392" cy="754" rx="4" ry="4" fill="#000"/><path d="M400 747h8l-4 12" fill="none" stroke="#20e0f0" stroke-width="3"/>
<rect x="446" y="733" width="30" height="31" fill="#c8c8c8" stroke="#111"/><path d="M450 738h16M450 745h10M452 735v7M456 735v7M452 742v7M456 742v7M468 738h3" stroke="#000" fill="none"/><circle cx="468" cy="738" r="2" fill="none" stroke="#000"/><path d="M450 753h10M450 756h11M450 759h9" stroke="#000"/><path d="M462 748l9 11" stroke="#333" stroke-width="2"/><circle cx="471" cy="759" r="3" fill="#f08020"/>
<rect x="508" y="733" width="30" height="31" fill="#c8c8c8" stroke="#111"/><path d="M517 737l6 6M523 737l-6 6" stroke="#000" stroke-width="1.500"/><path d="M510 752c5-5 9-6 13-5 5 2 8 6 10 11" fill="none" stroke="#000" stroke-width="2"/><path d="M530 752l3 7 3-5" fill="none" stroke="#000"/><circle cx="535" cy="760" r="3.500" fill="#ee1010"/>
<text x="1155" y="750" textLength="15" lengthAdjust="spacingAndGlyphs" style="font-size:12px"><tspan fill="#fff">EN</tspan></text>
<path d="M1186 752l4-4 4 4z" fill="#fff"/>
<path d="M1208 741v16M1208 742h11l-2 4 2 4h-11" fill="#f4f4f4" stroke="#fff" stroke-width="1.500"/><circle cx="1218" cy="752" r="4.500" fill="#d82020"/><path d="M1216 750l4 4M1220 750l-4 4" stroke="#fff"/>
<rect x="1232" y="742" width="6" height="11" fill="#fff" stroke="#333"/><rect x="1237" y="746" width="9" height="11" fill="#dfe6ee" stroke="#333"/><path d="M1244 749l5 8h-9z" fill="#f8c820" stroke="#333" stroke-width=".6"/>
<path d="M1256 747h3l5-4v12l-5-4h-3z" fill="#eef" stroke="#9ab"/><path d="M1266 746c2 2 2 4 0 6M1269 744c3 3 3 7 0 10" stroke="#fff" fill="none"/>
<text x="1291" y="745" style="font-size:12px" textLength="43" lengthAdjust="spacingAndGlyphs"><tspan fill="#fff">2:16 PM</tspan></text>
<text x="1290" y="762" style="font-size:12px" textLength="46" lengthAdjust="spacingAndGlyphs"><tspan fill="#fff">15/06/04</tspan></text>
</svg>
</body></html>
